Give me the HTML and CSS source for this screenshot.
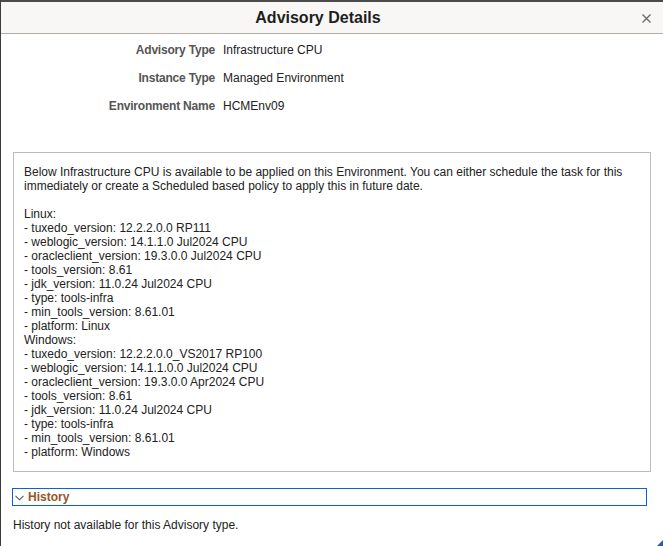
FILE: index.html
```html
<!DOCTYPE html>
<html>
<head>
<meta charset="utf-8">
<link rel="stylesheet" href="styles.css">
</head>
<body>
<div class="dialog">
  <div class="header">
    <div class="title">Advisory Details</div>
    <div class="close">
      <svg width="9" height="9" viewBox="0 0 9 9"><path d="M0.5 0.5 L8.5 8.5 M8.5 0.5 L0.5 8.5" stroke="#6a6a6a" stroke-width="1.3" fill="none"/></svg>
    </div>
  </div>
  <div class="fields">
    <div class="label">Advisory Type</div><div class="value">Infrastructure CPU</div>
    <div class="label">Instance Type</div><div class="value">Managed Environment</div>
    <div class="label">Environment Name</div><div class="value">HCMEnv09</div>
  </div>
  <div class="box">
    <p>Below Infrastructure CPU is available to be applied on this Environment. You can either schedule the task for this immediately or create a Scheduled based policy to apply this in future date.</p>
    <p>Linux:<br>
- tuxedo_version: 12.2.2.0.0 RP111<br>
- weblogic_version: 14.1.1.0 Jul2024 CPU<br>
- oracleclient_version: 19.3.0.0 Jul2024 CPU<br>
- tools_version: 8.61<br>
- jdk_version: 11.0.24 Jul2024 CPU<br>
- type: tools-infra<br>
- min_tools_version: 8.61.01<br>
- platform: Linux<br>
Windows:<br>
- tuxedo_version: 12.2.2.0.0_VS2017 RP100<br>
- weblogic_version: 14.1.1.0.0 Jul2024 CPU<br>
- oracleclient_version: 19.3.0.0 Apr2024 CPU<br>
- tools_version: 8.61<br>
- jdk_version: 11.0.24 Jul2024 CPU<br>
- type: tools-infra<br>
- min_tools_version: 8.61.01<br>
- platform: Windows</p>
  </div>
  <div class="history">
    <svg class="chev" width="9" height="6" viewBox="0 0 9 6"><path d="M0.5 0.8 L4.5 4.8 L8.5 0.8" stroke="#555" stroke-width="1.1" fill="none"/></svg>
    <span class="history-title">History</span>
  </div>
  <div class="history-note">History not available for this Advisory type.</div>
  <div class="grip"></div>
</div>
</body>
</html>
```
FILE: styles.css
```css
html, body {
  margin: 0;
  padding: 0;
  background: #fff;
}
body {
  font-family: "Liberation Sans", Arial, sans-serif;
  font-size: 12px;
  color: #222;
}
.dialog {
  position: relative;
  width: 663px;
  height: 546px;
  box-sizing: border-box;
  border-top: 2px solid #4b4b4b;
  border-left: 1px solid #3c3c3c;
  overflow: hidden;
}
.header {
  height: 32px;
  box-sizing: border-box;
  padding-top: 1px;
  background: #f8f7f5;
  border-bottom: 1px solid #b3ada5;
  display: flex;
  align-items: center;
}
.title {
  flex: 1;
  text-align: center;
  font-size: 16px;
  font-weight: bold;
  color: #1e1e1e;
}
.close {
  width: 23px;
  padding-right: 5px;
  display: flex;
  justify-content: center;
  padding-top: 1px;
}
.fields {
  display: grid;
  grid-template-columns: 214px 1fr;
  column-gap: 8px;
  row-gap: 14px;
  padding-top: 9px;
  line-height: 14px;
}
.label {
  text-align: right;
  color: #555;
  font-weight: bold;
  letter-spacing: -0.2px;
}
.value {
  color: #222;
}
.box {
  margin: 39px 12px 0 12px;
  border: 1px solid #bdbbb8;
  padding: 12px 10px 12px 10px;
  line-height: 14px;
  color: #222;
}
.box p {
  margin: 0;
}
.box p + p {
  margin-top: 14px;
}
.history {
  margin: 16px 16px 0 11px;
  height: 16px;
  border: 1px solid #0a63d6;
  display: flex;
  align-items: center;
  gap: 4px;
  padding-left: 2px;
}
.chev {
  margin-top: 2px;
}
.history-title {
  color: #9b5326;
  font-weight: bold;
  font-size: 12px;
}
.history-note {
  margin: 12px 0 0 12px;
  line-height: 14px;
  color: #222;
}
.grip {
  position: absolute;
  right: 0;
  bottom: 0;
  width: 0;
  height: 0;
  border-style: solid;
  border-width: 0 0 6px 6px;
  border-color: transparent transparent #2d5d9c transparent;
}
```
